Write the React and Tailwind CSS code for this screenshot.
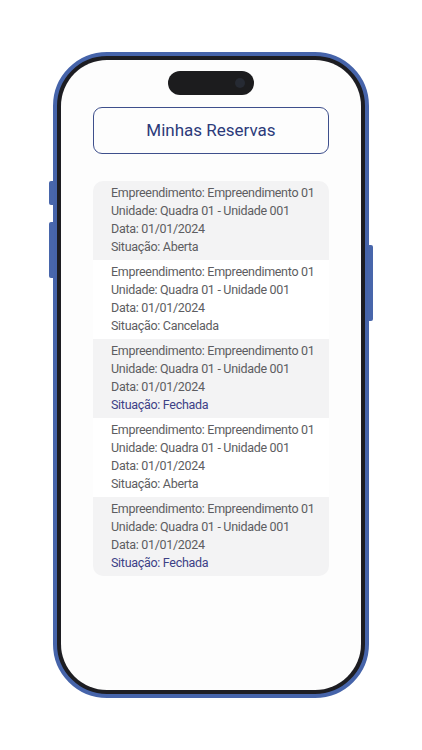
import React from "react";

const rows = [
  { s: "Aberta", blue: false, bg: "bg-[#f3f3f4]" },
  { s: "Cancelada", blue: false, bg: "bg-white" },
  { s: "Fechada", blue: true, bg: "bg-[#f3f3f4]" },
  { s: "Aberta", blue: false, bg: "bg-white" },
  { s: "Fechada", blue: true, bg: "bg-[#f3f3f4]" },
];

function Row({ r }) {
  return (
    <div className={`${r.bg} flex flex-col pl-[18px] pt-[3px] pb-[4px] text-[12.5px] leading-[18px] tracking-[-0.3px] text-[#5d5d61] whitespace-nowrap`}>
      <span>Empreendimento: Empreendimento 01</span>
      <span>Unidade: Quadra 01 - Unidade 001</span>
      <span>Data: 01/01/2024</span>
      <span className={r.blue ? "text-[#3d4186]" : ""}>Situação: {r.s}</span>
    </div>
  );
}

export default function App() {
  return (
    <div className="w-[422px] h-[750px] bg-white overflow-hidden flex justify-start" style={{ fontFamily: "Roboto, 'Noto Sans', sans-serif" }}>
      <div className="pt-[52px] pl-[53px]">
        <div className="relative w-[316px] h-[646px]">
          {/* side buttons */}
          <div className="absolute left-[-4px] top-[129px] w-[5px] h-[24px] rounded-l-[2px] bg-[#4866ab]" />
          <div className="absolute left-[-4px] top-[170px] w-[5px] h-[56px] rounded-l-[2px] bg-[#4866ab]" />
          <div className="absolute right-[-4px] top-[193px] w-[5px] h-[76px] rounded-r-[2px] bg-[#4866ab]" />
          <div className="w-full h-full rounded-[54px] border-[4px] border-[#4664aa] bg-[#1d1d22] p-[4px] flex">
            <div className="relative flex-1 rounded-[46px] bg-[#fdfdfd] overflow-hidden flex flex-col px-[32px] pt-[47px] gap-[27px]">
              {/* dynamic island */}
              <div className="absolute left-[107px] top-[11px] w-[86px] h-[24px] rounded-full bg-[#1c1c1e]">
                <div className="absolute right-[9px] top-[7px] w-[10px] h-[10px] rounded-full bg-[#262a33]" />
              </div>
              <div className="h-[47px] rounded-[9px] border border-[#3e4f8c] flex items-center justify-center">
                <span className="text-[17px] text-[#2c3a7a]">Minhas Reservas</span>
              </div>
              <div className="flex flex-col rounded-[10px] overflow-hidden">
                {rows.map((r, i) => (
                  <Row key={i} r={r} />
                ))}
              </div>
            </div>
          </div>
        </div>
      </div>
    </div>
  );
}
